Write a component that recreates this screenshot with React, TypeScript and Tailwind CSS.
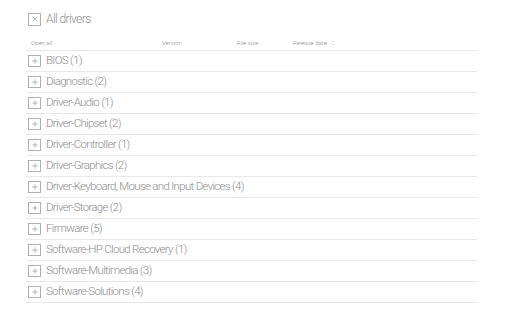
import { Plus, X, ChevronsUpDown } from 'lucide-react'

const categories = [
  'BIOS (1)',
  'Diagnostic (2)',
  'Driver-Audio (1)',
  'Driver-Chipset (2)',
  'Driver-Controller (1)',
  'Driver-Graphics (2)',
  'Driver-Keyboard, Mouse and Input Devices (4)',
  'Driver-Storage (2)',
  'Firmware (5)',
  'Software-HP Cloud Recovery (1)',
  'Software-Multimedia (3)',
  'Software-Solutions (4)',
]

export default function App() {
  return (
    <div className="w-[512px] h-[315px] bg-white font-['Roboto',sans-serif] font-light text-[#8e8e8e] pl-[26px] pr-[35px] pt-[12px]">
      <div className="flex items-center gap-[5px] h-[14px] pl-[2px]">
        <div className="w-[13px] h-[13px] border border-[#b0b0b0] flex items-center justify-center">
          <X className="w-[8px] h-[8px] text-[#777]" strokeWidth={1.5} />
        </div>
        <span className="text-[12px] tracking-[-0.6px] leading-none">All drivers</span>
      </div>

      <div className="flex items-end h-[25px] pb-[3px] text-[6px] text-[#888] border-b border-[#e8e8e8]">
        <span className="w-[136px] pl-[5px]">Open all</span>
        <span className="w-[75px]">Version</span>
        <span className="w-[56px]">File size</span>
        <span className="flex items-center gap-[3px]">
          Release date
          <ChevronsUpDown className="w-[6px] h-[6px] text-[#aaa]" strokeWidth={1.5} />
        </span>
      </div>

      {categories.map((c) => (
        <div key={c} className="flex items-center gap-[5px] h-[21px] pl-[2px] border-b border-[#e8e8e8]">
          <div className="w-[13px] h-[12px] border border-[#b0b0b0] flex items-center justify-center">
            <Plus className="w-[8px] h-[8px] text-[#777]" strokeWidth={1.5} />
          </div>
          <span className="text-[11.5px] tracking-[-0.7px] leading-none">{c}</span>
        </div>
      ))}
    </div>
  )
}
